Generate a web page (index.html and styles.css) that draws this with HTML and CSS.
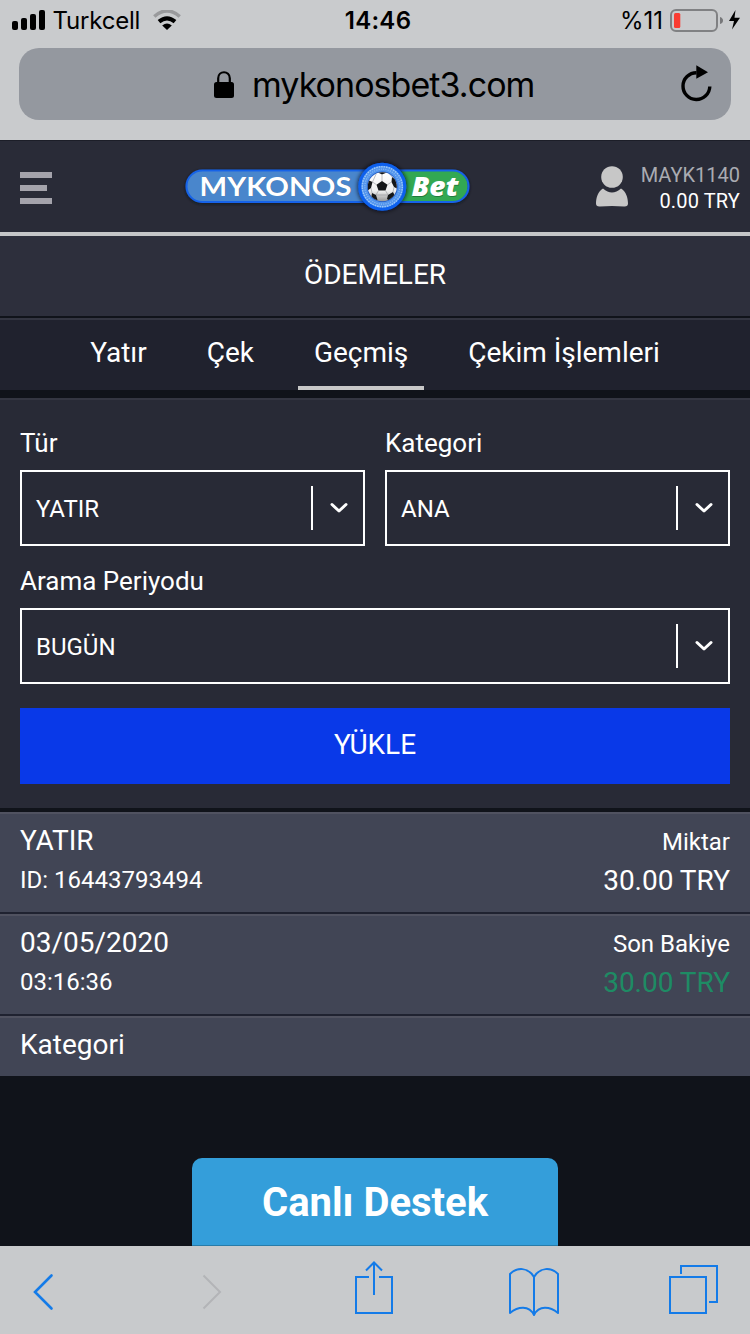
FILE: index.html
```html
<!DOCTYPE html>
<html lang="tr">
<head>
<meta charset="utf-8">
<title>Ödemeler</title>
<link rel="stylesheet" href="styles.css">
</head>
<body>
<div class="screen">
  <div class="status">
    <div class="status-left">
      <svg class="signal" width="34" height="21" viewBox="0 0 34 21"><rect x="0" y="11" width="6" height="9" rx="2"/><rect x="9" y="8" width="6" height="12" rx="2"/><rect x="18" y="4" width="6" height="16" rx="2"/><rect x="27" y="0" width="6" height="20" rx="2"/></svg>
      <span class="carrier">Turkcell</span>
      <svg class="wifi" width="28" height="21" viewBox="0 0 28 21" fill="none"><path d="M1.300 6.500Q14-4.500 26.700 6.500" stroke="#999a9c" stroke-width="3.600"/><path d="M6 11.600Q14 5 22 11.600" stroke="#000" stroke-width="4.200"/><path d="M9.200 15.600Q14 11.500 18.800 15.600L14 20Z" fill="#000"/></svg>
    </div>
    <div class="clock">14:46</div>
    <div class="status-right">
      <span class="percent">%11</span>
      <svg class="battery" width="72" height="24" viewBox="0 0 72 24"><rect x="1" y="1" width="46" height="21" rx="5" fill="none" stroke="#808183" stroke-width="2"/><rect x="4" y="4" width="6.300" height="15" rx="1.500" fill="#fa3c32"/><path d="M50 8Q53 9 53 11.500T50 15Z" fill="#77787a"/><path d="M65.500 1L59 12H64L62 20.500L70 8.800H64.500Z" fill="#000"/></svg>
    </div>
  </div>
  <div class="address">
    <div class="address-box">
      <svg class="lock" width="20" height="27" viewBox="0 0 20 27"><path d="M4.200 13V7.300C4.200-.800 15.800-.800 15.800 7.300V13" fill="none" stroke="#000" stroke-width="2.200"/><rect x="0" y="11" width="20" height="16" rx="2.500"/></svg>
      <span class="domain">mykonosbet3.com</span>
      <svg class="reload" width="32" height="37" viewBox="0 0 32 37"><path d="M15.500 7.700A13.400 13.400 0 1 0 28.800 21.500" fill="none" stroke="#000" stroke-width="3.400"/><path d="M15.300.3L27 7.200L15.300 13.800Z"/></svg>
    </div>
  </div>

  <header class="header">
    <svg class="menu" width="32" height="32" viewBox="0 0 32 32" fill="#a4a3ab"><path d="M0 0H32V6H0ZM0 13H27V19H0ZM0 26H32V32H0Z"/></svg>
    <svg class="logo" width="296" height="60" viewBox="182 158 296 60">
      <defs>
        <linearGradient id="ball" x1="0" y1="0" x2="0" y2="1"><stop offset="0" stop-color="#fff"/><stop offset=".65" stop-color="#eee"/><stop offset="1" stop-color="#999"/></linearGradient>
        <filter id="shade" x="-20%" y="-40%" width="140%" height="180%"><feDropShadow dx="0" dy="1" stdDeviation="1.500" flood-color="#10131c" flood-opacity=".9"/></filter>
        <filter id="glow" x="-30%" y="-30%" width="160%" height="160%"><feDropShadow dx="0" dy="0" stdDeviation="2.500" flood-color="#080c18"/></filter>
        <clipPath id="ballclip"><circle cx="382.300" cy="187.700" r="14.500"/></clipPath>
      </defs>
      <g filter="url(#shade)">
        <path d="M202.500 171.500H380V203H202.500A15.750 15.750 0 0 1 202.500 171.500Z" fill="#4a86cc"/>
        <path d="M380 171.500H452A15.750 15.750 0 0 1 452 203H380Z" fill="#32a852"/>
        <rect x="186.500" y="171.500" width="282" height="31.500" rx="15.750" fill="none" stroke="#1663e8" stroke-width="2"/>
      </g>
      <g fill="#173e70" opacity=".6"><text class="logo-name" x="200" y="197.300" textLength="152" lengthAdjust="spacingAndGlyphs">MYKONOS</text></g>
      <g fill="#fff"><text class="logo-name" x="199.500" y="196.500" textLength="152" lengthAdjust="spacingAndGlyphs">MYKONOS</text></g>
      <circle cx="382.300" cy="187.700" r="22.500" fill="#5295ed" stroke="#0c60ee" stroke-width="3" filter="url(#glow)"/>
      <circle cx="382.300" cy="187.700" r="20" fill="none" stroke="#9cc7fa" stroke-width="1.400" stroke-dasharray="1.500 1"/>
      <circle cx="382.300" cy="187.700" r="17.500" fill="none" stroke="#8ebcf5" stroke-width="1.200" stroke-dasharray="1 1.300"/>
      <circle cx="382.300" cy="187.700" r="15.300" fill="#1d58c4"/>
      <circle cx="382.300" cy="187.700" r="14.500" fill="url(#ball)"/>
      <g clip-path="url(#ballclip)">
        <path d="M382 182L387.500 185.700L385.500 191.500H378.500L376.500 185.700ZM377 173L382 175.500L388 173V171H377ZM368 181L372.500 183L371 189L367 192ZM392 178L396 181L398 190L394 188L391.500 183ZM372 194L376 196L377.500 201L371 200ZM388 196L393 193L395 197L390 202L387 200Z" fill="#151719"/>
        <path d="M382 182V175.500M387.500 185.700L391.500 183M385.500 191.500L388 196M378.500 191.500L376 196M376.500 185.700L372.500 183M371 189L372 194M377 173L372.500 183M388 173L392 178M394 188L393 193M376 196L388 196" stroke="#94969a" stroke-width=".6" fill="none"/>
      </g>
      <g fill="#155b2c" opacity=".6"><text class="logo-bet" x="412" y="197.800" textLength="47" lengthAdjust="spacingAndGlyphs">Bet</text></g>
      <g fill="#fff"><text class="logo-bet" x="411.500" y="197" textLength="47" lengthAdjust="spacingAndGlyphs">Bet</text></g>
    </svg>
    <div class="account">
      <svg width="34" height="42" viewBox="0 0 34 42" fill="#c7c7c7"><circle cx="17" cy="11" r="10.800"/><path d="M8 22.500Q17 30.500 26 22.500C31 25 33 32 33 37.500Q33 40.800 29 40.500Q17 39.300 5 40.500Q1 40.800 1 37.500C1 32 3 25 8 22.500Z"/></svg>
      <div class="account-text"><span class="user">MAYK1140</span><span class="balance">0.00 TRY</span></div>
    </div>
  </header>

  <h1 class="title">ÖDEMELER</h1>
  <nav class="tabs"><span class="tab">Yatır</span><span class="tab">Çek</span><span class="tab active">Geçmiş</span><span class="tab">Çekim İşlemleri</span></nav>

  <section class="form">
    <div class="pair">
      <div class="field"><label class="label">Tür</label><div class="select"><span class="value">YATIR</span><span class="divider"></span><svg class="chevron" width="18" height="12" viewBox="0 0 18 12"><path d="M2 2.500L9 9L16 2.500"/></svg></div></div>
      <div class="field"><label class="label">Kategori</label><div class="select"><span class="value">ANA</span><span class="divider"></span><svg class="chevron" width="18" height="12" viewBox="0 0 18 12"><path d="M2 2.500L9 9L16 2.500"/></svg></div></div>
    </div>
    <div class="field"><label class="label">Arama Periyodu</label><div class="select"><span class="value">BUGÜN</span><span class="divider"></span><svg class="chevron" width="18" height="12" viewBox="0 0 18 12"><path d="M2 2.500L9 9L16 2.500"/></svg></div></div>
    <div class="submit">YÜKLE</div>
  </section>

  <section class="results">
    <div class="row"><div class="cell"><span class="big">YATIR</span><span class="small">ID: 16443793494</span></div><div class="cell right"><span class="small">Miktar</span><span class="big">30.00 TRY</span></div></div>
    <div class="row"><div class="cell"><span class="big">03/05/2020</span><span class="small">03:16:36</span></div><div class="cell right"><span class="small">Son Bakiye</span><span class="big green">30.00 TRY</span></div></div>
    <div class="row last"><div class="cell"><span class="big">Kategori</span></div></div>
  </section>

  <div class="support-area"><div class="support">Canlı Destek</div></div>

  <footer class="toolbar">
    <svg width="750" height="88" viewBox="0 1246 750 88" fill="none" stroke="#147be8" stroke-width="2">
      <path d="M51.500 1275.500L35 1292L51.500 1308.500" stroke-width="2.600" stroke-linecap="round"/>
      <path d="M203.500 1275.500L220 1292L203.500 1308.500" stroke="#b3b4b7" stroke-width="2"/>
      <path d="M369 1277H356V1313H392V1277H379M374 1295V1263M366 1270.500L374 1262.500L382 1270.500"/>
      <path d="M534 1277C528 1267 517 1267 510 1274V1313C518 1306.500 529 1305 534 1315C539 1305 550 1306.500 558 1313V1274C551 1267 540 1267 534 1277V1315" stroke-linejoin="round"/>
      <path d="M670 1277H706V1313H670ZM681 1274V1266H717V1302H709"/>
    </svg>
  </footer>
</div>
</body>
</html>
```
FILE: styles.css
```css
* { box-sizing: border-box; }
body { margin: 0; background: #10131a; }
svg { display: block; flex: none; }
.screen { width: 750px; height: 1334px; overflow: hidden; display: flex; flex-direction: column; background: #10131a; color: #fff; font-family: Roboto, sans-serif; }
.screen > * { flex: none; }

.status { height: 40px; background: #c9cbcd; color: #000; display: grid; grid-template-columns: 1fr auto 1fr; font: 24px/42px Inter, sans-serif; }
.status-left { display: flex; padding-left: 12px; }
.signal { margin-top: 10px; }
.carrier { margin-left: 6.500px; width: 87.500px; white-space: nowrap; letter-spacing: -0.200px; }
.wifi { margin: 10px 0 0 13px; }
.clock { font-weight: 600; letter-spacing: 0.300px; padding-left: 6px; }
.status-right { display: flex; justify-content: flex-end; padding-right: 8px; }
.percent { letter-spacing: 0; }
.battery { margin: 9px 0 0 7px; }

.address { height: 100px; padding: 8px 19px 20px; background: #c9cbcd; color: #000; }
.address-box { height: 72px; border-radius: 20px; background: #94989f; display: flex; align-items: center; padding-left: 195px; font: 34px/72px Inter, sans-serif; }
.domain { margin-left: 18px; padding-top: 1px; width: 284px; white-space: nowrap; letter-spacing: -0.950px; }
.reload { margin-left: 145px; margin-bottom: 1px; }

.header { height: 96px; background: #292b37; border-top: 1px solid #1c1e28; border-bottom: 4px solid #c5c6c8; display: flex; align-items: center; padding: 4px 10px 0 20px; }
.menu { margin-bottom: 2px; }
.logo { margin: 0 0 4px 130px; }
.logo-name { font: 700 26px Lato, sans-serif; }
.logo-bet { font: italic 800 26px "Open Sans", sans-serif; }
.account { margin-left: auto; display: flex; align-items: center; margin-bottom: 3px; }
.account-text { display: flex; flex-direction: column; align-items: flex-end; width: 111px; padding-top: 2px; font-size: 20px; line-height: 26px; }
.user { color: #aaabb2; }
.balance { letter-spacing: 0.150px; }

.title { height: 80px; margin: 0; background: #2d2f3c; font-size: 28px; font-weight: 400; line-height: 77px; text-align: center; }
.tabs { height: 74px; border-top: 2px solid #10131a; box-shadow: inset 0 2px #333541; background: #20222e; display: flex; justify-content: center; gap: 28px; font-size: 28px; line-height: 69px; }
.tab { padding: 0 16px; letter-spacing: -0.020px; }
.active { border-bottom: 4px solid #c8c8c8; }

.form { margin-top: 8px; height: 410px; border-top: 2px solid #343642; background: #282a36; padding: 26px 20px 0; }
.pair { display: grid; grid-template-columns: 1fr 1fr; gap: 20px; }
.field { margin-bottom: 18px; }
.label { display: block; font-size: 26px; line-height: 34px; height: 44px; }
.select { height: 76px; border: 2px solid #fff; display: flex; align-items: center; padding: 0 15px 0 14px; font-size: 24px; }
.value { margin-right: auto; padding-top: 1px; }
.divider { width: 2px; height: 44px; background: #fff; margin-right: 17px; }
.chevron path { fill: none; stroke: #fff; stroke-width: 3; stroke-linecap: round; stroke-linejoin: round; }
.submit { margin-top: 24px; height: 76px; background: #0939e8; text-align: center; font-size: 28px; line-height: 73px; }

.results { margin-top: 4px; }
.row { height: 102px; border-top: 2px solid #505260; border-bottom: 2px solid #1f2230; background: #414555; display: flex; justify-content: space-between; padding: 6px 20px 0; }
.cell { display: flex; flex-direction: column; }
.big { font-size: 28px; line-height: 42px; height: 40px; }
.small { font-size: 24px; line-height: 40px; }
.right { align-items: flex-end; }
.right .small { padding-top: 2px; height: 40px; }
.green { color: #1e8b64; }
.last { height: 60px; border-bottom: 0; }

.support-area { height: 170px; display: flex; justify-content: center; align-items: flex-end; }
.support { width: 366px; height: 88px; border-radius: 10px 10px 0 0; background: #349eda; border-bottom: 1px solid #287ca9; text-align: center; font-size: 40px; font-weight: 700; line-height: 90px; }
.toolbar { height: 88px; background: #c8cacc; }
```
